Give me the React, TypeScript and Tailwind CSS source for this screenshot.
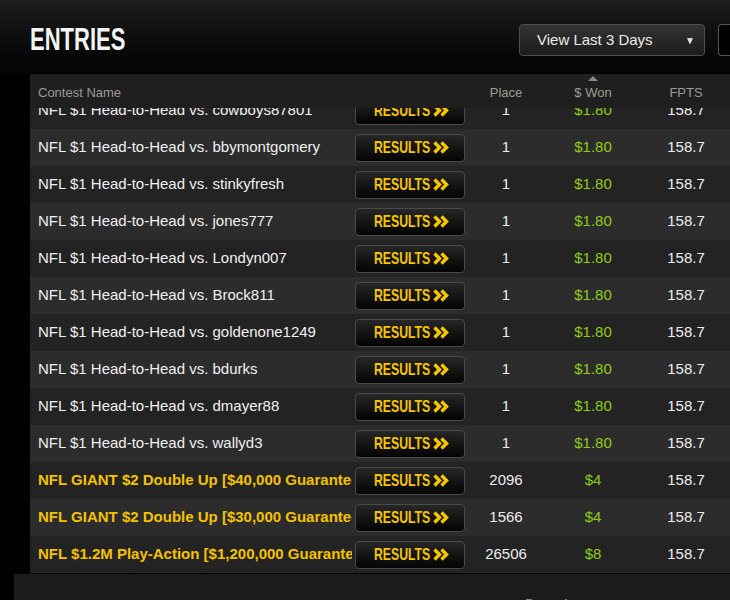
type Entry = {
  name: string;
  place: string;
  won: string;
  fpts: string;
  featured?: boolean;
};

const entries: Entry[] = [
  { name: 'NFL $1 Head-to-Head vs. cowboys87801', place: '1', won: '$1.80', fpts: '158.7' },
  { name: 'NFL $1 Head-to-Head vs. bbymontgomery', place: '1', won: '$1.80', fpts: '158.7' },
  { name: 'NFL $1 Head-to-Head vs. stinkyfresh', place: '1', won: '$1.80', fpts: '158.7' },
  { name: 'NFL $1 Head-to-Head vs. jones777', place: '1', won: '$1.80', fpts: '158.7' },
  { name: 'NFL $1 Head-to-Head vs. Londyn007', place: '1', won: '$1.80', fpts: '158.7' },
  { name: 'NFL $1 Head-to-Head vs. Brock811', place: '1', won: '$1.80', fpts: '158.7' },
  { name: 'NFL $1 Head-to-Head vs. goldenone1249', place: '1', won: '$1.80', fpts: '158.7' },
  { name: 'NFL $1 Head-to-Head vs. bdurks', place: '1', won: '$1.80', fpts: '158.7' },
  { name: 'NFL $1 Head-to-Head vs. dmayer88', place: '1', won: '$1.80', fpts: '158.7' },
  { name: 'NFL $1 Head-to-Head vs. wallyd3', place: '1', won: '$1.80', fpts: '158.7' },
  { name: 'NFL GIANT $2 Double Up [$40,000 Guaranteed]', place: '2096', won: '$4', fpts: '158.7', featured: true },
  { name: 'NFL GIANT $2 Double Up [$30,000 Guaranteed]', place: '1566', won: '$4', fpts: '158.7', featured: true },
  { name: 'NFL $1.2M Play-Action [$1,200,000 Guaranteed]', place: '26506', won: '$8', fpts: '158.7', featured: true },
];

const sans = { fontFamily: '"Liberation Sans", Arial, sans-serif' };

function DoubleChevron() {
  return (
    <svg width="16" height="13" viewBox="0 0 16 13" className="shrink-0">
      <polyline points="1.5,1.5 6.5,6.5 1.5,11.5" fill="none" stroke="#f7c600" strokeWidth="3.4" />
      <polyline points="8.5,1.5 13.5,6.5 8.5,11.5" fill="none" stroke="#f7c600" strokeWidth="3.4" />
    </svg>
  );
}

function ResultsButton() {
  return (
    <button className="flex h-[28px] w-[110px] items-center justify-center rounded-[4px] border border-[#4a4a4a] bg-gradient-to-b from-[#272727] to-[#050505] pl-[3px]">
      <span className="inline-block w-[59px] text-[17px] font-bold leading-none text-[#f7c600]">
        <span className="inline-block origin-left scale-x-[0.72]">RESULTS</span>
      </span>
      <DoubleChevron />
    </button>
  );
}

export default function App() {
  return (
    <div style={sans} className="flex h-[600px] w-[730px] flex-col overflow-hidden bg-black">
      {/* Header */}
      <div className="flex h-[74px] shrink-0 items-start bg-gradient-to-b from-[#1d1d1d] to-[#030303] pl-[30px] pt-[24px]">
        <h1 className="mt-[1px] w-[100px] text-[31px] font-bold leading-[30px] text-[#f4f4f4]">
          <span className="inline-block origin-left scale-x-[0.71]">ENTRIES</span>
        </h1>
        <div className="ml-auto flex items-center gap-[13px]">
          <div className="flex h-[32px] w-[186px] items-center justify-between rounded-[4px] border border-[#4e4e4e] bg-gradient-to-b from-[#343434] to-[#1c1c1c] pl-[17px] pr-[9px]">
            <span className="text-[15px] text-[#ececec]">View Last 3 Days</span>
            <span className="text-[10px] text-[#e6e6e6]">▼</span>
          </div>
          <div className="h-[32px] w-[12px] rounded-l-[4px] border border-r-0 border-[#555] bg-black" />
        </div>
      </div>

      {/* Table */}
      <div className="flex h-[500px] shrink-0 pl-[30px]">
        <div className="flex w-[703px] shrink-0 flex-col">
          <div className="grid h-[34px] shrink-0 grid-cols-[325px_110px_82px_92px_94px] items-center bg-[#1f1f1f] pt-[4px] text-[13px] text-[#9c9c94]">
            <div className="pl-[8px]">Contest Name</div>
            <div />
            <div className="text-center">Place</div>
            <div className="relative text-center">
              <span className="absolute left-1/2 top-[-7px] h-0 w-0 -translate-x-1/2 border-x-[5px] border-b-[5px] border-x-transparent border-b-[#8a8a8a]" />
              $ Won
            </div>
            <div className="text-center">FPTS</div>
          </div>
          <div className="flex-1 overflow-hidden">
            <div className="-mt-[16px]">
              {entries.map((e, i) => (
                <div
                  key={i}
                  className={`grid h-[37px] grid-cols-[325px_110px_82px_92px_94px] items-center text-[15px] ${
                    i % 2 === 0 ? 'bg-[#232323]' : 'bg-[#2c2c2c]'
                  }`}
                >
                  <div
                    className={`w-[322px] overflow-hidden whitespace-nowrap pl-[8px] ${
                      e.featured ? 'font-bold text-[#f5c200]' : 'text-[#f0f0f0]'
                    }`}
                  >
                    {e.name}
                  </div>
                  <div>
                    <ResultsButton />
                  </div>
                  <div className="text-center text-[#ededed]">{e.place}</div>
                  <div className="text-center text-[#8fcb16]">{e.won}</div>
                  <div className="text-center text-[#ededed]">{e.fpts}</div>
                </div>
              ))}
            </div>
          </div>
        </div>
      </div>

      {/* Footer */}
      <div className="flex flex-1 pl-[14px]">
        <div className="flex flex-1 bg-[#1b1b1b] pl-[511px] pt-[20px]">
          <span className="text-[13px] text-[#8a8a8a]">Page: 1</span>
        </div>
      </div>
    </div>
  );
}
